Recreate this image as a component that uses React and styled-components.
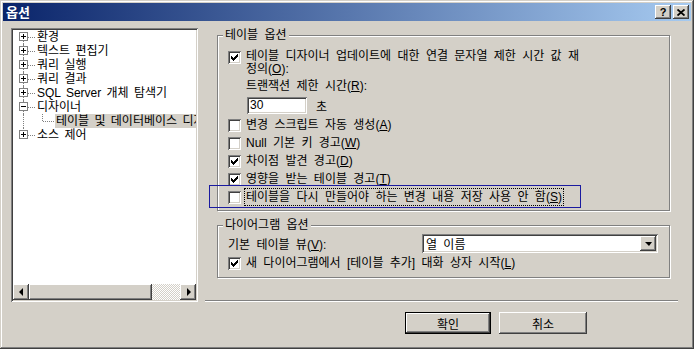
import React from 'react'
import styled, { createGlobalStyle } from 'styled-components'

const GlobalStyle = createGlobalStyle`
  html, body { margin: 0; padding: 0; background: #d4d0c8; }
  body {
    font-family: "Liberation Sans", "Noto Sans CJK KR", sans-serif;
    font-size: 12px;
    color: #000;
  }
`

const raised = `
  box-shadow: inset -1px -1px #404040, inset 1px 1px #fff,
    inset -2px -2px #808080, inset 2px 2px #d4d0c8;
`
const sunken = `
  box-shadow: inset 1px 1px #808080, inset -1px -1px #fff,
    inset 2px 2px #404040, inset -2px -2px #d4d0c8;
`

const Window = styled.div`
  width: 694px;
  height: 349px;
  box-sizing: border-box;
  padding: 3px;
  background: #d4d0c8;
  box-shadow: inset -1px -1px #404040, inset 1px 1px #d4d0c8,
    inset -2px -2px #808080, inset 2px 2px #fff;
  display: flex;
  flex-direction: column;
`

const TitleBar = styled.div`
  height: 18px;
  flex: none;
  display: flex;
  align-items: center;
  padding: 0 2px 0 3px;
  background: linear-gradient(to right, #0a246a, #a6caf0);
`

const Title = styled.span`
  flex: 1;
  color: #fff;
  font-family: "Noto Sans CJK KR", sans-serif;
  font-weight: bold;
  font-size: 13px;
  line-height: 18px;
`

const CapButton = styled.span`
  width: 16px;
  height: 14px;
  margin-left: ${p => p.$gap}px;
  display: flex;
  align-items: center;
  justify-content: center;
  background: #d4d0c8;
  ${raised}
  font-family: "Liberation Sans", sans-serif;
  font-weight: bold;
  font-size: 11px;
  line-height: 14px;
`

const Body = styled.div`
  flex: 1;
  display: flex;
  padding: 7px 0 0 8px;
`

const TreeBox = styled.div`
  width: 187px;
  height: 274px;
  flex: none;
  box-sizing: border-box;
  padding: 2px;
  background: #fff;
  ${sunken}
  display: flex;
  flex-direction: column;
`

const TreeList = styled.div`
  flex: 1;
  overflow: hidden;
  padding-left: 5px;
  word-spacing: 2px;
`

const TreeRow = styled.div`
  display: flex;
  align-items: center;
  height: 14px;
  white-space: nowrap;
`

const Joint = styled.span`
  position: relative;
  flex: none;
  width: ${p => (p.$pass ? 19 : 18)}px;
  height: 14px;
  &::before {
    content: '';
    position: absolute;
    left: 5px;
    top: ${p => (p.$first ? '7px' : '0')};
    bottom: ${p => (p.$last ? '7px' : '0')};
    border-left: 1px dotted #808080;
  }
  &::after {
    content: '';
    display: ${p => (p.$pass ? 'none' : 'block')};
    position: absolute;
    left: 6px;
    right: 1px;
    top: 7px;
    border-top: 1px dotted #808080;
  }
`

const Expander = styled.span`
  position: absolute;
  z-index: 1;
  left: 1px;
  top: 2px;
  width: 9px;
  height: 9px;
  box-sizing: border-box;
  border: 1px solid #808080;
  background: #fff;
  &::before {
    content: '';
    position: absolute;
    left: 1px;
    top: 3px;
    width: 5px;
    height: 1px;
    background: #000;
  }
  &::after {
    content: '';
    display: ${p => (p.$open ? 'none' : 'block')};
    position: absolute;
    left: 3px;
    top: 1px;
    width: 1px;
    height: 5px;
    background: #000;
  }
`

const NodeLabel = styled.span`
  padding: 0 2px 0 1px;
  height: 14px;
  line-height: 14px;
  background: ${p => (p.$selected ? '#d4d0c8' : 'transparent')};
  ${p => p.$selected && 'flex: 1;'}
`

const ScrollBar = styled.div`
  height: 16px;
  flex: none;
  display: flex;
`

const ArrowButton = styled.span`
  width: 16px;
  height: 16px;
  flex: none;
  display: flex;
  align-items: center;
  justify-content: center;
  background: #d4d0c8;
  ${raised}
  &::before {
    content: '';
    width: 0;
    height: 0;
    border-top: 4px solid transparent;
    border-bottom: 4px solid transparent;
    ${p => (p.$dir === 'left' ? 'border-right: 4px solid #000; margin-left: -1px;' : 'border-left: 4px solid #000; margin-left: 1px;')}
  }
`

const Thumb = styled.span`
  width: 123px;
  height: 16px;
  flex: none;
  background: #d4d0c8;
  ${raised}
`

const Track = styled.span`
  flex: 1;
  background-color: #fff;
  background-image: repeating-conic-gradient(#d4d0c8 0 25%, #fff 0 50%);
  background-size: 2px 2px;
`

const RightCol = styled.div`
  width: 473px;
  margin-left: 7px;
  display: flex;
  flex-direction: column;
`

const Group = styled.section`
  width: 453px;
  box-sizing: border-box;
  margin: ${p => p.$top}px 0 0 12px;
  padding: 0 11px ${p => p.$bottom}px 10px;
  border: 1px solid #808080;
  box-shadow: inset 1px 1px #fff, 1px 1px #fff;
`

const Caption = styled.div`
  width: fit-content;
  height: 14px;
  line-height: 14px;
  margin: -8px 0 0 -5px;
  padding: 0 2px;
  background: #d4d0c8;
  word-spacing: 3px;
`

const CheckRow = styled.div`
  position: relative;
  display: flex;
  align-items: ${p => (p.$multi ? 'flex-start' : 'center')};
  gap: 5px;
  height: ${p => (p.$multi ? 'auto' : '18px')};
  margin-top: ${p => p.$top || 0}px;
  white-space: nowrap;
  word-spacing: 3px;
`

const Box = styled.span`
  width: 13px;
  height: 13px;
  flex: none;
  margin-top: ${p => (p.$multi ? 1 : 0)}px;
  display: flex;
  align-items: center;
  justify-content: center;
  background: #fff;
  ${sunken}
`

const Label = styled.span`
  line-height: 13px;
  ${p => p.$focused && `
    margin-left: -2px;
    padding: 0 1px;
    line-height: 16px;
    border: 1px dotted #000;
  `}
`

const Mark = styled.span`
  position: absolute;
  left: -19px;
  top: -3px;
  width: 372px;
  height: 23px;
  box-sizing: border-box;
  border: 1px solid #1a1aa0;
  pointer-events: none;
`

const TextLine = styled.div`
  margin: ${p => p.$top}px 0 0 18px;
  line-height: 13px;
  word-spacing: 3px;
`

const InputRow = styled.div`
  display: flex;
  align-items: center;
  margin: 4px 0 0 19px;
`

const TextInput = styled.span`
  width: 60px;
  height: 17px;
  box-sizing: border-box;
  padding: 2px 0 0 3px;
  line-height: 13px;
  background: #fff;
  ${sunken}
`

const Unit = styled.span`
  margin-left: 9px;
`

const FieldRow = styled.div`
  display: flex;
  align-items: center;
  justify-content: space-between;
  margin-top: 2px;
  word-spacing: 3px;
`

const Combo = styled.span`
  width: 236px;
  height: 19px;
  box-sizing: border-box;
  padding: 2px;
  display: flex;
  align-items: center;
  background: #fff;
  ${sunken}
`

const ComboText = styled.span`
  flex: 1;
  padding-left: 2px;
  word-spacing: 3px;
`

const DropButton = styled.span`
  width: 16px;
  height: 15px;
  display: flex;
  align-items: center;
  justify-content: center;
  background: #d4d0c8;
  ${raised}
  &::before {
    content: '';
    width: 0;
    height: 0;
    border-left: 4px solid transparent;
    border-right: 3px solid transparent;
    border-top: 4px solid #000;
  }
`

const Separator = styled.div`
  height: 0;
  margin-top: 22px;
  border-top: 1px solid #808080;
  border-bottom: 1px solid #fff;
`

const ButtonRow = styled.div`
  display: flex;
  gap: 8px;
  margin: 10px 0 0 200px;
`

const PushButton = styled.span`
  width: ${p => p.$w}px;
  height: 22px;
  display: flex;
  align-items: center;
  justify-content: center;
  background: #d4d0c8;
  ${p => (p.$default
    ? `box-shadow: inset 0 0 0 1px #000, inset -2px -2px #404040, inset 2px 2px #fff,
         inset -3px -3px #808080, inset 3px 3px #d4d0c8;`
    : raised)}
`

const CheckMark = () => (
  <svg width="7" height="7" viewBox="0 0 7 7" shapeRendering="crispEdges">
    <path d="M0 2H1V3H2V4H3V3H4V2H5V1H6V0H7V3H6V4H5V5H4V6H3V7H2V6H1V5H0Z" fill="#000" />
  </svg>
)

const CloseGlyph = () => (
  <svg width="8" height="7" viewBox="0 0 8 7">
    <path d="M0.5 0.5L7.5 6.5M7.5 0.5L0.5 6.5" stroke="#000" strokeWidth="1.8" />
  </svg>
)

const Check = ({ checked, multi }) => (
  <Box $multi={multi}>{checked && <CheckMark />}</Box>
)

const roots = ['환경', '텍스트 편집기', '쿼리 실행', '쿼리 결과', 'SQL Server 개체 탐색기', '디자이너', '소스 제어']

const Tree = () => (
  <TreeBox>
    <TreeList>
      {roots.map((name, i) => (
        <React.Fragment key={name}>
          <TreeRow>
            <Joint $first={i === 0} $last={i === roots.length - 1}>
              <Expander $open={name === '디자이너'} />
            </Joint>
            <NodeLabel>{name}</NodeLabel>
          </TreeRow>
          {name === '디자이너' && (
            <TreeRow>
              <Joint $pass />
              <Joint $last />
              <NodeLabel $selected>테이블 및 데이터베이스 디자이너</NodeLabel>
            </TreeRow>
          )}
        </React.Fragment>
      ))}
    </TreeList>
    <ScrollBar>
      <ArrowButton $dir="left" />
      <Thumb />
      <Track />
      <ArrowButton $dir="right" />
    </ScrollBar>
  </TreeBox>
)

const tableOptions = [
  { text: <>변경 스크립트 자동 생성(<u>A</u>)</>, checked: false },
  { text: <>Null 기본 키 경고(<u>W</u>)</>, checked: false },
  { text: <>차이점 발견 경고(<u>D</u>)</>, checked: true },
  { text: <>영향을 받는 테이블 경고(<u>T</u>)</>, checked: true },
  { text: <>테이블을 다시 만들어야 하는 변경 내용 저장 사용 안 함(<u>S</u>)</>, checked: false, focused: true },
]

export default function App() {
  return (
    <>
      <GlobalStyle />
      <Window>
        <TitleBar>
          <Title>옵션</Title>
          <CapButton $gap={0}>?</CapButton>
          <CapButton $gap={2}><CloseGlyph /></CapButton>
        </TitleBar>
        <Body>
          <Tree />
          <RightCol>
            <Group $top={7} $bottom={4}>
              <Caption>테이블 옵션</Caption>
              <CheckRow $multi $top={8}>
                <Check checked multi />
                <Label>
                  테이블 디자이너 업데이트에 대한 연결 문자열 제한 시간 값 재<br />
                  정의(<u>O</u>):
                </Label>
              </CheckRow>
              <TextLine $top={4}>트랜잭션 제한 시간(<u>R</u>):</TextLine>
              <InputRow>
                <TextInput>30</TextInput>
                <Unit>초</Unit>
              </InputRow>
              {tableOptions.map((opt, i) => (
                <CheckRow key={i} $top={i === 0 ? 2 : 0}>
                  {opt.focused && <Mark />}
                  <Check checked={opt.checked} />
                  <Label $focused={opt.focused}>{opt.text}</Label>
                </CheckRow>
              ))}
            </Group>
            <Group $top={14} $bottom={5}>
              <Caption>다이어그램 옵션</Caption>
              <FieldRow>
                <span>기본 테이블 뷰(<u>V</u>):</span>
                <Combo>
                  <ComboText>열 이름</ComboText>
                  <DropButton />
                </Combo>
              </FieldRow>
              <CheckRow $top={1}>
                <Check checked />
                <Label>새 다이어그램에서 [테이블 추가] 대화 상자 시작(<u>L</u>)</Label>
              </CheckRow>
            </Group>
            <Separator />
            <ButtonRow>
              <PushButton $w={86} $default>확인</PushButton>
              <PushButton $w={88}>취소</PushButton>
            </ButtonRow>
          </RightCol>
        </Body>
      </Window>
    </>
  )
}
